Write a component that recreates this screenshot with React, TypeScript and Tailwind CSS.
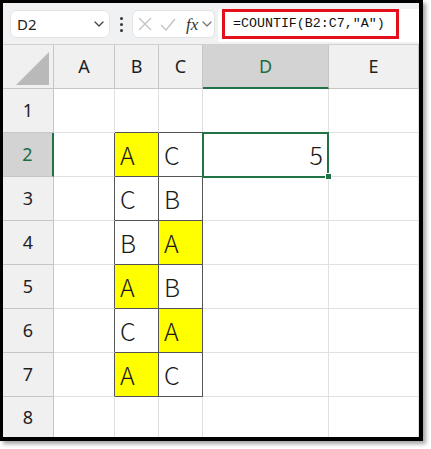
import React from "react";

const data: [string, string][] = [
  ["A", "C"],
  ["C", "B"],
  ["B", "A"],
  ["A", "B"],
  ["C", "A"],
  ["A", "C"],
];
const yellow: [boolean, boolean][] = [
  [true, false],
  [false, false],
  [false, true],
  [true, false],
  [false, true],
  [true, false],
];

const cellFont = { fontFamily: '"Noto Sans CJK JP", "Noto Sans", sans-serif' };
const headFont = { fontFamily: '"Noto Sans", "Liberation Sans", sans-serif' };

function Chevron({ className }: { className?: string }) {
  return (
    <svg className={className} width="10" height="6" viewBox="0 0 10 6" fill="none">
      <path d="M1 1l4 4 4-4" stroke="currentColor" strokeWidth="1.3" strokeLinecap="round" strokeLinejoin="round" />
    </svg>
  );
}

function FormulaBar() {
  return (
    <div className="flex h-[41px] shrink-0 items-start bg-[#f0f1f3] pt-[7px]">
      <div className="ml-[7px] flex h-[28px] w-[100px] items-center justify-between rounded-md border border-[#e2e3e5] bg-white pl-[6px] pr-[5px]">
        <span className="text-[15px] text-[#222]" style={headFont}>D2</span>
        <Chevron className="text-[#444]" />
      </div>
      <div className="flex h-[28px] w-[22px] flex-col items-center justify-center gap-[3px]">
        <span className="h-[3px] w-[3px] rounded-full bg-[#333]" />
        <span className="h-[3px] w-[3px] rounded-full bg-[#333]" />
        <span className="h-[3px] w-[3px] rounded-full bg-[#333]" />
      </div>
      <div className="flex h-[28px] w-[83px] items-center rounded-md border border-[#e2e3e5] bg-white pl-[5px]">
        <svg width="14" height="14" viewBox="0 0 14 14" fill="none">
          <path d="M1 1l12 12M13 1L1 13" stroke="#c4c4c4" strokeWidth="1.4" />
        </svg>
        <svg className="ml-[8px]" width="16" height="13" viewBox="0 0 16 13" fill="none">
          <path d="M1 7l5 5L15 1" stroke="#c4c4c4" strokeWidth="1.4" />
        </svg>
        <span
          className="ml-[10px] text-[17px] italic leading-none text-[#333]"
          style={{ fontFamily: '"Liberation Serif", serif' }}
        >
          fx
        </span>
        <Chevron className="ml-[4px] text-[#777]" />
      </div>
      <div className="ml-[3px] -mt-[1px] flex h-[33px] flex-1 items-start bg-white pl-[4px]">
        <div className="flex h-[30px] w-[177px] items-center border-[3px] border-[#e3101b] pl-[8px]">
          <span className="text-[13.3px] text-[#111]" style={{ fontFamily: '"Liberation Mono", monospace' }}>
            =COUNTIF(B2:C7,"A")
          </span>
        </div>
      </div>
    </div>
  );
}

export default function App() {
  const cols = ["A", "B", "C", "D", "E"];
  return (
    <div className="h-[449px] w-[431px] bg-white">
      <div className="flex h-[441px] w-[423px] flex-col overflow-hidden border-b-[4px] border-l-[3px] border-r-[4px] border-t-[3px] border-black bg-white shadow-[3px_3px_4px_rgba(0,0,0,0.35)]">
        <FormulaBar />
        <div className="grid grid-cols-[51px_61px_44px_44px_126px_90px] grid-rows-[44px_repeat(7,44px)_41px] border-t border-[#d0d0d0]">
          {/* header row */}
          <div className="flex items-end justify-end border-b border-r border-[#c6c6c6] bg-[#f0f0f0] pb-[3px] pr-[4px]">
            <svg width="33" height="33" viewBox="0 0 33 33">
              <polygon points="33,0 33,33 0,33" fill="#b9b9b9" />
            </svg>
          </div>
          {cols.map((c) =>
            c === "D" ? (
              <div
                key={c}
                className="flex items-center justify-center border-b-2 border-r border-b-[#217346] border-r-[#c6c6c6] bg-[#d3d3d3] text-[18px] text-[#1d6b40]"
                style={headFont}
              >
                {c}
              </div>
            ) : (
              <div
                key={c}
                className="flex items-center justify-center border-b border-r border-[#c6c6c6] bg-[#f0f0f0] text-[18px] text-[#1f1f1f]"
                style={headFont}
              >
                {c}
              </div>
            )
          )}
          {/* body rows */}
          {Array.from({ length: 8 }, (_, i) => i + 1).map((r) => {
            const inBlock = r >= 2 && r <= 7;
            const idx = r - 2;
            return (
              <React.Fragment key={r}>
                {r === 2 ? (
                  <div
                    className="flex items-center justify-center border-b border-r-2 border-b-[#c6c6c6] border-r-[#217346] bg-[#d3d3d3] text-[18px] text-[#1d6b40]"
                    style={headFont}
                  >
                    {r}
                  </div>
                ) : (
                  <div
                    className="flex items-center justify-center border-b border-r border-[#c6c6c6] bg-[#f0f0f0] text-[18px] text-[#1f1f1f]"
                    style={headFont}
                  >
                    {r}
                  </div>
                )}
                {/* A */}
                <div className={inBlock ? "border-b border-r border-b-[#e1e1e1] border-r-[#555]" : "border-b border-r border-[#e1e1e1]"} />
                {/* B, C */}
                {[0, 1].map((k) =>
                  inBlock ? (
                    <div
                      key={k}
                      className={
                        "flex items-center border-b border-r border-[#555] pl-[5px] text-[25px] font-light leading-none text-[#1a1a1a] " +
                        (yellow[idx][k] ? "bg-[#ffff00]" : "bg-white")
                      }
                      style={cellFont}
                    >
                      {data[idx][k]}
                    </div>
                  ) : r === 1 ? (
                    <div key={k} className="border-b border-r border-b-[#555] border-r-[#e1e1e1]" />
                  ) : (
                    <div key={k} className="border-b border-r border-[#e1e1e1]" />
                  )
                )}
                {/* D */}
                {r === 2 ? (
                  <div
                    className="relative flex items-center justify-end border-b border-r border-[#e1e1e1] pr-[5px] text-[25px] font-light leading-none text-[#1a1a1a]"
                    style={cellFont}
                  >
                    5
                    <div className="absolute -left-[1px] -top-[1px] z-10 h-[46px] w-[127px] border-2 border-[#217346]" />
                    <div className="absolute -bottom-[4px] -right-[4px] z-20 h-[7px] w-[7px] border border-white bg-[#217346]" />
                  </div>
                ) : (
                  <div className="border-b border-r border-[#e1e1e1]" />
                )}
                {/* E */}
                <div className="border-b border-r border-[#e1e1e1]" />
              </React.Fragment>
            );
          })}
        </div>
      </div>
    </div>
  );
}
